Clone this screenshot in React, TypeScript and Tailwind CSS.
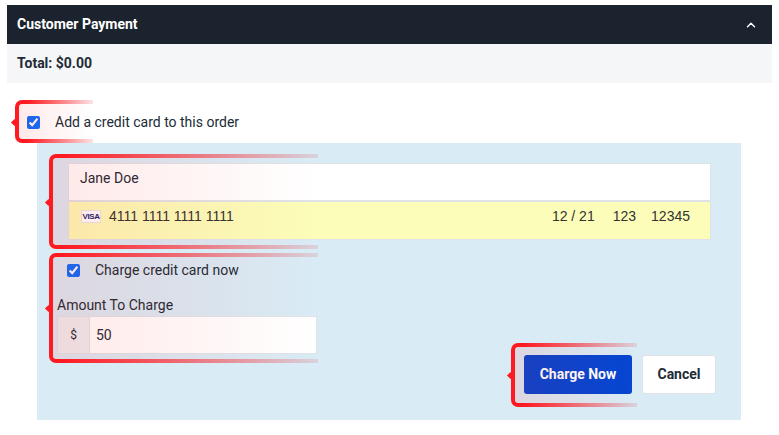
import React from 'react';
import { ChevronUp } from 'lucide-react';

function Bracket({ className }: { className: string }) {
  return (
    <div className={`absolute pointer-events-none ${className}`}>
      <div className="absolute inset-0 rounded-l-[7px] bg-gradient-to-r from-[#ff000017] to-[#ff000000]" />
      <div className="absolute left-0 top-0 bottom-0 w-[12px] rounded-l-[7px] border-l-[4px] border-y-[4px] border-[#ff1a22]" />
      <div className="absolute left-[12px] right-0 top-0 h-[4px] bg-gradient-to-r from-[#ff1a22] to-[#d8303a22]" />
      <div className="absolute left-[12px] right-0 bottom-0 h-[4px] bg-gradient-to-r from-[#ff1a22] to-[#d8303a22]" />
      <div className="absolute -left-[3px] top-1/2 -mt-[2px] w-[5px] h-[5px] rotate-45 bg-[#ff1a22]" />
    </div>
  );
}

export default function App() {
  return (
    <div className="relative w-[779px] h-[435px] overflow-hidden bg-white pt-[5px] px-[7px] text-[14px] text-[#212b36] font-['Roboto',sans-serif]">
      <div className="flex items-center justify-between h-[39px] pl-[10px] pr-[14px] bg-[#1a232e] text-white font-bold">
        <span>Customer Payment</span>
        <ChevronUp className="w-[14px] h-[14px]" strokeWidth={2.5} />
      </div>
      <div className="flex items-center h-[39px] pl-[10px] bg-[#f4f6f8] font-bold">Total: $0.00</div>

      <label className="flex items-center h-[60px] pt-[18px] pl-[20px] gap-[15px]">
        <input type="checkbox" defaultChecked className="w-[13px] h-[13px] m-0 accent-[#0d6efd]" />
        <span>Add a credit card to this order</span>
      </label>

      <div className="ml-[30px] w-[704px] h-[277px] bg-[#d9ebf5] pt-[20px]">
        <div className="ml-[31px] w-[643px] border border-[#dfe3e8] bg-white">
          <div className="flex items-center h-[38px] pl-[11px] pb-[8px] border-b-[2px] border-[#dfe3e8]">Jane Doe</div>
          <div className="flex items-center h-[37px] pl-[12px] pr-[20px] pb-[8px] bg-[#fbfdb9] text-[14px] text-[#333333] font-['Liberation_Sans',sans-serif]">
            <span className="flex items-center justify-center w-[20px] h-[13px] mr-[8px] bg-white border border-[#e8e8e8] text-[8px] leading-none font-bold tracking-tighter text-[#1a1f71]">VISA</span>
            <span>4111 1111 1111 1111</span>
            <span className="ml-auto">12 / 21</span>
            <span className="ml-[18px]">123</span>
            <span className="ml-[15px]">12345</span>
          </div>
        </div>

        <label className="flex items-center h-[20px] mt-[20px] ml-[30px] gap-[15px]">
          <input type="checkbox" defaultChecked className="w-[13px] h-[13px] m-0 accent-[#0d6efd]" />
          <span>Charge credit card now</span>
        </label>

        <div className="ml-[20px] mt-[15px] w-[260px]">
          <div className="h-[20px] leading-[20px] mb-[1px]">Amount To Charge</div>
          <div className="flex h-[38px] border border-[#dfe3e8] bg-white">
            <span className="flex items-center justify-center w-[32px] bg-[#eceff2] border-r border-[#dfe3e8] text-[12px]">$</span>
            <span className="flex items-center pl-[6px]">50</span>
          </div>
        </div>

        <div className="flex justify-end items-center gap-[10px] mr-[25px] mt-[1px]">
          <button className="w-[108px] h-[39px] rounded-[3px] bg-[#0546d2] text-white font-bold">Charge Now</button>
          <button className="w-[74px] h-[39px] rounded-[3px] bg-white border border-[#dfe3e8] font-bold">Cancel</button>
        </div>
      </div>

      <Bracket className="left-[15px] top-[100px] w-[78px] h-[43px]" />
      <Bracket className="left-[49px] top-[154px] w-[269px] h-[95px]" />
      <Bracket className="left-[49px] top-[253px] w-[269px] h-[110px]" />
      <Bracket className="left-[511px] top-[343px] w-[126px] h-[64px]" />
    </div>
  );
}
